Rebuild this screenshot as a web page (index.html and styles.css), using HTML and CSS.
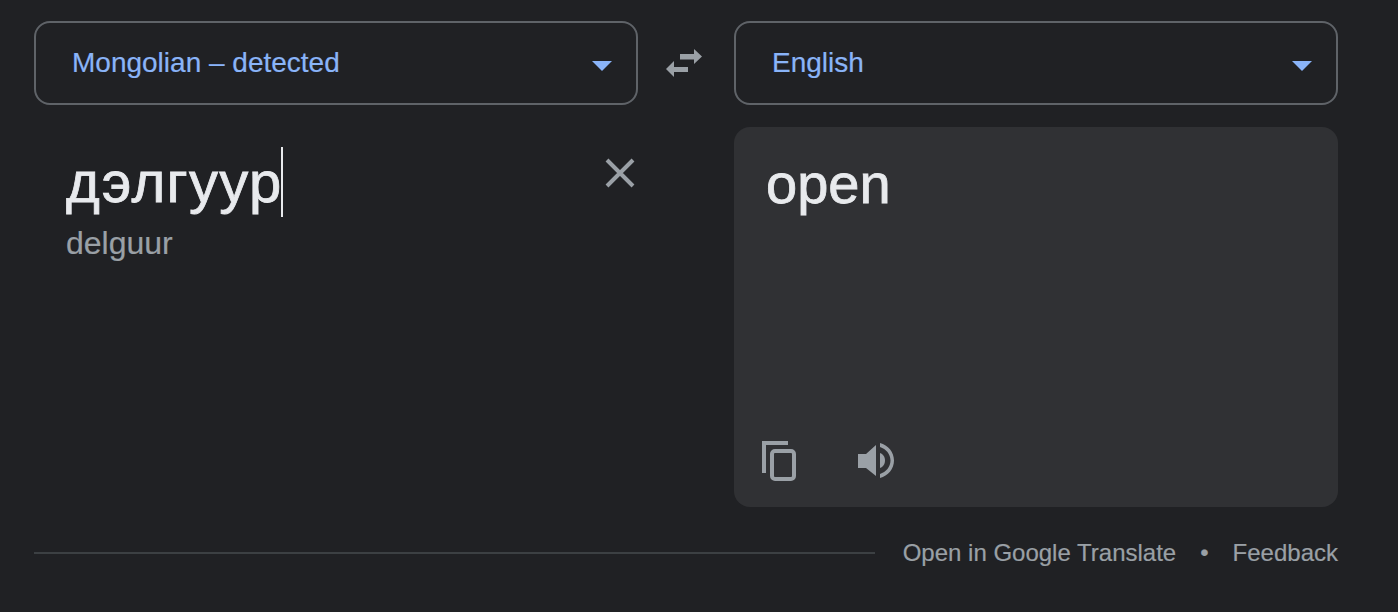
FILE: index.html
```html
<!DOCTYPE html>
<html>

<head>
    <meta name="viewport" content="width=device-width, initial-scale=1">
    <title>Translate</title>
    <link rel="stylesheet" href="styles.css">
</head>

<body>
    <div class="container">
        <div class="lang-row">
            <div class="lang-select">
                <span>Mongolian – detected</span>
                <i class="caret"></i>
            </div>
            <div class="swap">
                <svg width="36" height="28" viewBox="0 0 36 28">
                    <path d="M28 0 L36 7.5 L28 15 V10.5 H14 V5 H28 Z"/>
                    <path d="M8 12 L0 20 L8 28 V23 H22 V18 H8 Z"/>
                </svg>
            </div>
            <div class="lang-select">
                <span>English</span>
                <i class="caret"></i>
            </div>
        </div>
        <div class="text-row">
            <div class="source">
                <div class="source-top">
                    <div class="source-text">дэлгуур<span class="cursor"></span></div>
                    <svg class="clear" width="32" height="32" viewBox="0 0 32 32">
                        <path d="M3 3 L29 29 M29 3 L3 29"/>
                    </svg>
                </div>
                <div class="translit">delguur</div>
            </div>
            <div class="output">
                <div class="output-text">open</div>
                <div class="actions">
                    <svg width="34" height="40" viewBox="0 0 34 40">
                        <path class="copy" d="M2 32 V2 H26 M10 13 a3 3 0 0 1 3 -3 H29 a3 3 0 0 1 3 3 V35 a3 3 0 0 1 -3 3 H13 a3 3 0 0 1 -3 -3 Z"/>
                    </svg>
                    <svg class="speaker" width="36" height="35" viewBox="0 0 36 35">
                        <path d="M0 11 H8 L18 2 V33 L8 25 H0 Z"/>
                        <path d="M22 10 C25 11 27 14 27 17.5 C27 21 25 24 22 25 Z"/>
                        <path d="M22 0 C30 2 36 9 36 17.5 C36 26 30 33 22 35 V31 C28 29 32.5 24 32.5 17.5 C32.5 11 28 6 22 4 Z"/>
                    </svg>
                </div>
            </div>
        </div>
        <div class="footer">
            <div class="rule"></div>
            <span>Open in Google Translate</span>
            <span class="dot">•</span>
            <span>Feedback</span>
        </div>
    </div>
</body>

</html>
```

FILE: styles.css
```css
:root {
    --bg-color: #202124;
    --panel-bg: #303134;
    --blue: #8ab4f8;
    --grey: #9aa0a6;
    --border: #5f6368;
    --text-color: #e8eaed;
}

html,
body {
    height: 100%;
}

body {
    background-color: var(--bg-color);
    color: var(--text-color);
    font-family: "Liberation Sans", Arial, sans-serif;
    margin: 0;
    overflow: hidden;
}

.container {
    padding: 21px 60px 0 34px;
}

.lang-row {
    display: grid;
    grid-template-columns: 604px 96px 604px;
    align-items: center;
}

.lang-select {
    box-sizing: border-box;
    height: 84px;
    border: 2px solid var(--border);
    border-radius: 16px;
    padding: 0 24px 0 36px;
    display: flex;
    align-items: center;
    justify-content: space-between;
    color: var(--blue);
    font-size: 28px;
    -webkit-text-stroke: 0.2px var(--blue);
}

.caret {
    width: 0;
    height: 0;
    border-left: 10px solid transparent;
    border-right: 10px solid transparent;
    border-top: 10px solid var(--blue);
    margin-top: 6px;
}

.swap {
    display: flex;
    justify-content: center;
    padding-right: 4px;
}

.swap svg {
    fill: var(--grey);
}

.text-row {
    display: grid;
    grid-template-columns: 604px 604px;
    margin-top: 22px;
    gap: 96px;
}

.source,
.output {
    box-sizing: border-box;
    height: 380px;
}

.source {
    padding: 20px 0 0 32px;
}

.source-top {
    display: flex;
    justify-content: space-between;
    align-items: flex-start;
}

.source-text {
    font-size: 58px;
    letter-spacing: 1.3px;
    line-height: 70px;
    -webkit-text-stroke: 0.8px var(--text-color);
}

.cursor {
    display: inline-block;
    width: 2px;
    height: 70px;
    margin-left: -2px;
    background-color: var(--text-color);
    vertical-align: top;
}

.clear {
    margin: 10px 2px 0 0;
}

.clear path {
    stroke: var(--grey);
    stroke-width: 4;
    fill: none;
}

.translit {
    color: var(--grey);
    font-size: 32px;
    line-height: 40px;
    margin-top: 6px;
    -webkit-text-stroke: 0.2px var(--grey);
}

.output {
    background-color: var(--panel-bg);
    border-radius: 16px;
    padding: 22px 32px 0;
    display: flex;
    flex-direction: column;
    justify-content: space-between;
}

.output-text {
    font-size: 56px;
    line-height: 70px;
    -webkit-text-stroke: 0.8px var(--text-color);
}

.actions {
    display: flex;
    align-items: flex-start;
    gap: 62px;
    margin: 0 0 26px -4px;
}

.actions svg {
    fill: var(--grey);
}

.actions .speaker {
    margin-top: 2px;
}

.actions .copy {
    fill: none;
    stroke: var(--grey);
    stroke-width: 4;
}

.footer {
    display: flex;
    align-items: center;
    margin-top: 28px;
    color: var(--grey);
    font-size: 24px;
    line-height: 36px;
    -webkit-text-stroke: 0.2px var(--grey);
}

.rule {
    flex: 1;
    height: 2px;
    background-color: #3c4043;
    margin-right: 28px;
}

.dot {
    margin: 0 24px;
}
```
